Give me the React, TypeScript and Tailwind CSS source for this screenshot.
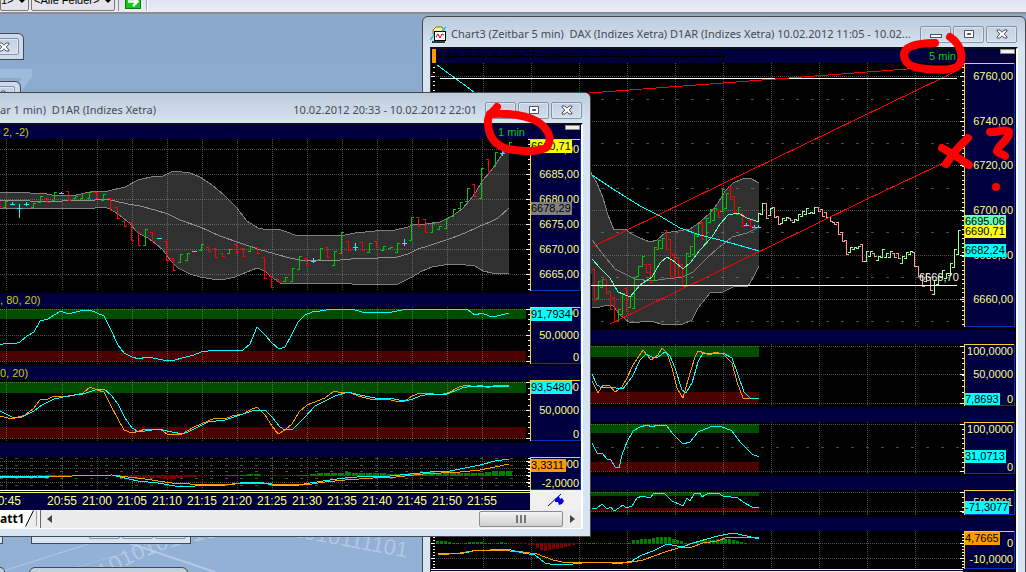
import type { ReactNode } from 'react';

type Kind = 'u' | 'd' | 'n';
type Bar = [x: number, high: number, low: number, kind: Kind];

type AxisLabel = { y: number; text: string };
type AxisTag = { y: number; text: string; fill: string; color?: string; width?: number };

const CYAN = '#00ffff';
const ORANGE = '#ff9900';
const RED = '#ff0000';
const GREEN = '#00c800';

const strong = { u: GREEN, d: RED, n: CYAN };
const pale = { u: '#99ff99', d: '#ff9999', n: CYAN };

const minuteBars: Bar[] = [
  [-2, 204, 207, 'd'], [5, 201, 208, 'u'], [12, 202, 205, 'n'], [19, 204, 218, 'n'], [26, 202, 206, 'n'],
  [33, 203, 208, 'u'], [40, 196, 203, 'u'], [47, 198, 203, 'd'], [54, 192, 201, 'u'], [61, 192, 194, 'n'],
  [68, 191, 201, 'd'], [75, 196, 199, 'u'], [82, 193, 199, 'u'], [89, 192, 199, 'u'], [96, 192, 199, 'd'],
  [103, 194, 201, 'u'], [110, 198, 211, 'd'], [117, 207, 219, 'd'], [124, 221, 227, 'd'], [131, 222, 241, 'd'],
  [138, 231, 246, 'd'], [145, 229, 246, 'u'], [152, 232, 242, 'd'], [159, 238, 238, 'n'], [166, 241, 261, 'd'],
  [173, 258, 271, 'd'], [180, 254, 263, 'u'], [187, 253, 261, 'u'], [194, 251, 251, 'n'], [201, 244, 251, 'u'],
  [208, 247, 252, 'd'], [215, 248, 258, 'd'], [222, 253, 257, 'd'], [229, 249, 254, 'u'], [236, 244, 253, 'd'],
  [243, 248, 257, 'd'], [250, 246, 252, 'u'], [257, 247, 254, 'd'], [264, 257, 279, 'd'], [271, 276, 288, 'd'],
  [278, 279, 283, 'd'], [285, 277, 282, 'u'], [292, 268, 282, 'u'], [299, 256, 270, 'u'], [306, 258, 266, 'd'],
  [313, 258, 263, 'n'], [320, 248, 260, 'u'], [327, 247, 258, 'd'], [334, 251, 266, 'u'], [341, 232, 254, 'u'],
  [348, 241, 251, 'd'], [355, 243, 251, 'n'], [362, 242, 251, 'd'], [369, 243, 253, 'u'], [376, 241, 248, 'd'],
  [383, 246, 251, 'u'], [390, 247, 249, 'u'], [397, 243, 253, 'u'], [404, 239, 246, 'n'], [411, 217, 241, 'u'],
  [418, 217, 227, 'd'], [425, 219, 233, 'd'], [432, 223, 233, 'u'], [439, 226, 230, 'u'], [446, 218, 229, 'u'],
  [453, 209, 217, 'u'], [460, 202, 209, 'u'], [467, 188, 202, 'u'], [474, 184, 197, 'd'], [481, 168, 199, 'u'],
  [488, 159, 172, 'd'], [495, 152, 167, 'u'], [502, 150, 156, 'n'], [509, 142, 148, 'u'],
];

const fiveMinuteBars: Bar[] = [
  [594, 269, 301, 'd'], [598, 281, 299, 'u'], [602, 279, 288, 'u'], [606, 279, 294, 'd'], [610, 291, 310, 'd'],
  [614, 297, 322, 'd'], [618, 309, 321, 'u'], [622, 293, 315, 'u'], [626, 288, 312, 'd'], [630, 296, 308, 'u'],
  [634, 277, 309, 'u'], [638, 266, 277, 'u'], [642, 256, 267, 'u'], [646, 264, 273, 'd'], [650, 264, 283, 'd'],
  [654, 247, 281, 'u'], [658, 240, 250, 'u'], [662, 238, 249, 'u'], [666, 230, 250, 'd'], [670, 239, 277, 'd'],
  [674, 254, 280, 'd'], [678, 257, 277, 'd'], [682, 264, 287, 'd'], [686, 253, 287, 'u'], [690, 246, 257, 'u'],
  [694, 234, 255, 'u'], [698, 223, 237, 'u'], [702, 222, 240, 'd'], [706, 218, 244, 'u'], [710, 209, 223, 'u'],
  [714, 208, 221, 'u'], [718, 209, 218, 'd'], [722, 189, 212, 'u'], [726, 193, 209, 'u'], [730, 186, 200, 'd'],
  [734, 196, 213, 'd'], [738, 207, 215, 'u'], [742, 213, 227, 'd'], [746, 223, 226, 'n'], [750, 220, 227, 'd'],
  [754, 225, 228, 'n'], [758, 225, 228, 'n'],
];

const previewBars: Bar[] = [
  [758, 213, 222, 'u'], [762, 203, 215, 'u'], [766, 203, 219, 'd'], [770, 208, 216, 'u'], [774, 207, 218, 'd'],
  [778, 216, 225, 'd'], [782, 218, 224, 'u'], [786, 217, 221, 'u'], [790, 218, 221, 'd'], [794, 219, 223, 'u'],
  [798, 214, 221, 'u'], [802, 211, 217, 'u'], [806, 208, 215, 'u'], [810, 212, 214, 'u'], [814, 207, 214, 'u'],
  [818, 207, 212, 'd'], [822, 209, 217, 'd'], [826, 212, 218, 'd'], [830, 217, 222, 'd'], [834, 222, 225, 'd'],
  [838, 222, 235, 'd'], [842, 232, 242, 'd'], [846, 240, 255, 'd'], [850, 247, 253, 'u'], [854, 247, 250, 'u'],
  [858, 246, 249, 'u'], [862, 244, 262, 'd'], [866, 251, 262, 'u'], [870, 251, 257, 'u'], [874, 253, 257, 'd'],
  [878, 256, 261, 'u'], [882, 249, 258, 'u'], [886, 253, 258, 'u'], [890, 251, 258, 'u'], [894, 253, 258, 'd'],
  [898, 253, 259, 'd'], [902, 256, 264, 'u'], [906, 252, 259, 'u'], [910, 251, 255, 'u'], [914, 252, 267, 'd'],
  [918, 266, 277, 'd'], [922, 275, 287, 'd'], [926, 273, 282, 'u'], [930, 277, 291, 'd'], [934, 280, 295, 'u'],
  [938, 276, 285, 'u'], [942, 270, 278, 'u'], [946, 273, 279, 'u'], [950, 263, 276, 'u'], [954, 249, 268, 'u'],
  [958, 230, 255, 'u'],
];

const minuteGrid = [6, 62, 97, 132, 167, 202, 237, 272, 307, 342, 377, 412, 447, 482];
const fiveGrid = [483, 531, 579, 627, 675, 723, 771, 819, 867, 915];

const minuteUpper =
  '0,192 30,193 42,193 52,195 67,195 76,195 90,192 108,191 125,187 138,180 155,176 163,176 173,171 190,173 200,177 212,185 224,195 236,207 247,221 258,228 268,230 278,229 290,233 297,236 320,235 345,235 355,233 375,231 395,230 408,227 415,224 425,224 440,222 452,216 462,209 470,200 476,192 482,181 490,172 497,162 503,153 509,145';
const minuteLower =
  '509,273 492,273 483,271 475,266 456,264 450,264 432,267 422,271 412,277 398,284 352,284 340,283 300,283 288,284 280,283 270,276 265,271 257,268 247,272 235,277 222,280 212,279 200,277 190,274 178,268 170,260 163,250 156,244 148,238 138,233 128,222 118,214 110,209 104,207 95,208 62,208 45,208 35,209 0,208';
const fiveUpper =
  '590,168 592,175 597,183 603,198 608,215 614,230 625,229 632,234 640,238 650,242 657,240 665,233 678,231 690,229 700,222 710,213 718,203 725,191 733,183 742,179 750,178 759,183';
const fiveLower =
  '759,266 753,278 748,286 733,287 723,292 710,293 698,308 692,320 683,324 665,325 650,321 630,323 620,315 613,306 608,305 600,307 592,308';

function range(from: number, to: number, step: number) {
  const out: number[] = [];
  for (let v = from; v <= to; v += step) out.push(v);
  return out;
}

function Grid({
  xs,
  ys,
  dashes = [],
  left,
  right,
  top,
  bottom,
}: {
  xs: number[];
  ys: number[];
  dashes?: number[];
  left: number;
  right: number;
  top: number;
  bottom: number;
}) {
  return (
    <g stroke="#a0a0a0" strokeOpacity={0.48}>
      {xs.map((x) => (
        <line key={`x${x}`} x1={x + 0.5} x2={x + 0.5} y1={top} y2={bottom} strokeDasharray="1 1" />
      ))}
      {ys.map((y) => (
        <line key={`y${y}`} x1={left} x2={right} y1={y + 0.5} y2={y + 0.5} strokeDasharray="1 1" />
      ))}
      {dashes.map((y) => (
        <line key={`d${y}`} x1={left} x2={right} y1={y + 0.5} y2={y + 0.5} strokeDasharray="3 12" />
      ))}
    </g>
  );
}

function Ticks({ x, major, minor }: { x: number; major: number[]; minor: number[] }) {
  return (
    <g fill="#ffffff">
      {major.map((y) => (
        <rect key={`M${y}`} x={x - 4} y={y} width={4} height={1} />
      ))}
      {minor.map((y) => (
        <rect key={`m${y}`} x={x - 2} y={Math.round(y)} width={2} height={1} />
      ))}
    </g>
  );
}

function Bars({ data, colors }: { data: Bar[]; colors: Record<Kind, string> }) {
  return (
    <>
      {data.map(([x, high, low, kind]) => {
        const mid = Math.round((high + low) / 2) - (low - high > 8 ? 3 : 0);
        const left = kind === 'u' ? low - 1 : kind === 'd' ? high : mid;
        const right = kind === 'u' ? high : kind === 'd' ? low - 1 : mid;
        return (
          <g key={`${x}-${high}`} fill={colors[kind]}>
            <rect x={x} y={high} width={1} height={Math.max(1, low - high)} />
            <rect x={x - 2} y={left} width={2} height={1} />
            <rect x={x + 1} y={right} width={2} height={1} />
          </g>
        );
      })}
    </>
  );
}

function Line({ points, color, width = 1 }: { points: string; color: string; width?: number }) {
  return <polyline points={points} fill="none" stroke={color} strokeWidth={width} />;
}

function Zones({
  left,
  right,
  green,
  red,
}: {
  left: number;
  right: number;
  green: [number, number];
  red: [number, number];
}) {
  return (
    <>
      <rect x={left} y={green[0]} width={right - left} height={green[1] - green[0]} fill="#004d00" />
      <rect x={left} y={red[0]} width={right - left} height={red[1] - red[0]} fill="#4d0000" />
    </>
  );
}

function Histogram({ start, step, base, values }: { start: number; step: number; base: number; values: number[] }) {
  return (
    <>
      {values.map((v, i) =>
        v === 0 ? null : (
          <rect
            key={i}
            x={start + i * step}
            y={v > 0 ? base - v + 1 : base}
            width={step - 1}
            height={Math.abs(v)}
            fill={v > 0 ? '#008000' : '#800000'}
          />
        )
      )}
    </>
  );
}

function Axis({
  top,
  height,
  labels,
  tags,
}: {
  top: number;
  height: number;
  labels: AxisLabel[];
  tags: AxisTag[];
}) {
  return (
    <svg
      viewBox={`0 ${top} 51 ${height}`}
      width={51}
      height={height}
      className="shrink-0 font-['Liberation_Sans',sans-serif] text-[11px]"
    >
      <rect x={0} y={top} width={51} height={height} fill="#000040" />
      {labels.map((l) => (
        <text key={l.text} x={49} y={l.y + 4} textAnchor="end" fill="#ffff80">
          {l.text}
        </text>
      ))}
      {tags.map((t) => (
        <g key={t.text}>
          <rect x={1} y={t.y - 6} width={t.width ?? 41} height={13} fill={t.fill} />
          <text x={1} y={t.y + 4} fill={t.color ?? '#000000'}>
            {t.text}
          </text>
        </g>
      ))}
      <rect x={50} y={top} width={1} height={height} fill="#0033cc" />
      <rect x={0} y={top + height - 1} width={51} height={1} fill="#0033cc" />
      <rect x={0} y={top} width={1} height={height} fill="#ffcc33" />
      <rect x={0} y={top} width={50} height={1} fill="#ffcc33" />
    </svg>
  );
}

function Panel({
  header,
  left,
  width,
  top,
  height,
  gap,
  labels,
  tags,
  children,
}: {
  header?: ReactNode;
  left: number;
  width: number;
  top: number;
  height: number;
  gap: number;
  labels: AxisLabel[];
  tags: AxisTag[];
  children: ReactNode;
}) {
  return (
    <section>
      <header className="flex h-3.5 items-center overflow-hidden bg-[#000040] font-['Liberation_Sans',sans-serif] text-[11px] leading-[14px] whitespace-pre text-[#cccc00]">
        {header}
      </header>
      <div className="flex items-start bg-black">
        <svg
          viewBox={`${left} ${top} ${width} ${height}`}
          height={height}
          preserveAspectRatio="xMaxYMin meet"
          shapeRendering="crispEdges"
          className="min-w-0 flex-1"
        >
          {children}
        </svg>
        <Axis top={top} height={height - gap} labels={labels} tags={tags} />
      </div>
    </section>
  );
}

function CaptionButton({ kind }: { kind: 'Minimize' | 'Maximize' | 'Close' }) {
  return (
    <button
      type="button"
      aria-label={kind}
      className="flex h-[17px] w-[31px] items-center justify-center rounded-[2px] border border-[#8293ad] bg-linear-to-b from-[#c3d0df] to-[#d3dfec] shadow-[inset_0_0_0_1px_#dde7f1]"
    >
      <svg width={12} height={10} viewBox="0 0 12 10">
        {kind === 'Minimize' && (
          <rect x={0.5} y={5.5} width={11} height={3} fill="#fff" stroke="#4b5365" />
        )}
        {kind === 'Maximize' && (
          <path d="M1.5 1.5h9v7h-9zM4.5 4.5h3v1h-3z" fill="#fff" stroke="#4b5365" />
        )}
        {kind === 'Close' && (
          <path
            d="M1 1h3l2 2.2L8 1h3v1L8.2 5 11 8v1H8L6 6.8 4 9H1V8l2.8-3L1 2z"
            fill="#fff"
            stroke="#4b5365"
          />
        )}
      </svg>
    </button>
  );
}

function Caption({ children }: { children: ReactNode }) {
  return (
    <div className="flex h-[30px] items-center pt-1 pr-px font-['Noto_Sans','Open_Sans',sans-serif] text-[11px] whitespace-pre text-[#454c55]">
      {children}
      <div className="ml-2 flex shrink-0 gap-0.5">
        <CaptionButton kind="Minimize" />
        <CaptionButton kind="Maximize" />
        <CaptionButton kind="Close" />
      </div>
    </div>
  );
}

function PeriodLabel({ children, swatch }: { children: ReactNode; swatch: string }) {
  return (
    <span className="ml-auto flex shrink-0 items-start text-[#00cc00]">
      {children}
      <span className={swatch} />
    </span>
  );
}

function MinuteWindow() {
  return (
    <article className="absolute top-[78px] right-[435px] left-0 rounded-tr-md border border-l-0 border-[#45484d] bg-linear-to-b from-[#bccbdb] via-[#d7e4f1] via-[30px] to-[#d7e4f1] pr-[7px] pb-[7px]">
      <Caption>
        <span className="min-w-0 flex-1 overflow-hidden">{'ar 1 min)  D1AR (Indizes Xetra)'}</span>
        <span>10.02.2012 20:33 - 10.02.2012 22:01</span>
      </Caption>
      <div className="border-t-2 border-r-2 border-b border-t-[#101010] border-r-white border-b-white bg-black">
        <Panel
          left={0}
          width={530}
          top={139}
          height={154}
          gap={2}
          header={
            <>
              <span className="pl-[3px]">2, -2)</span>
              <PeriodLabel swatch="mr-px ml-10 h-[5px] w-[15px] border border-[#8a8a8a] bg-[#f0f0f0]">
                1 min
              </PeriodLabel>
            </>
          }
          labels={[
            { y: 149, text: '6690,00' },
            { y: 174, text: '6685,00' },
            { y: 199, text: '6680,00' },
            { y: 224, text: '6675,00' },
            { y: 249, text: '6670,00' },
            { y: 274, text: '6665,00' },
          ]}
          tags={[
            { y: 146, text: '6690,71', fill: '#ffff00' },
            { y: 208, text: '6678,29', fill: '#808080' },
          ]}
        >
          <polygon points={`${minuteUpper} ${minuteLower}`} fill="#303030" />
          <Line points={minuteUpper} color="#808080" />
          <Line points={minuteLower} color="#808080" />
          <Grid
            xs={minuteGrid}
            ys={[149, 174, 199, 224, 249, 274]}
            left={0}
            right={526}
            top={139}
            bottom={291}
          />
          <Line
            color="#909090"
            points="0,200 30,201 62,201 80,200 95,200 105,199 115,201 128,204 140,206 155,210 168,214 180,220 200,227 220,236 240,243 258,249 275,254 290,258 300,260 315,260 340,260 362,258 378,258 397,257 408,254 418,249 428,246 440,242 452,238 465,233 478,227 490,222 498,218 509,208"
          />
          <Bars data={minuteBars} colors={strong} />
          <Ticks x={530} major={[149, 174, 199, 224, 249, 274]} minor={range(139, 290, 5)} />
        </Panel>

        <Panel
          left={0}
          width={530}
          top={307}
          height={59}
          gap={2}
          header={<span className="-ml-1.5">3, 80, 20)</span>}
          labels={[
            { y: 313, text: '100,0000' },
            { y: 335, text: '50,0000' },
            { y: 357, text: '0' },
          ]}
          tags={[{ y: 314, text: '91,7934', fill: CYAN }]}
        >
          <Zones left={0} right={526} green={[309, 319]} red={[351, 361]} />
          <Grid xs={minuteGrid} ys={[309, 335, 361]} left={0} right={526} top={307} bottom={364} />
          <Line
            color={CYAN}
            points="0,345 6,343 14,344 20,342 27,336 34,332 40,321 48,319 54,315 61,311 68,314 76,312 84,310 90,310 97,313 104,316 111,330 118,345 124,353 132,357 139,359 146,357 153,358 163,360 175,360 182,358 194,355 201,352 215,350 222,351 243,350 250,344 257,327 265,335 272,343 279,349 285,347 292,334 298,322 305,315 312,312 320,311 332,309 352,309 362,312 392,312 402,310 415,309 425,310 432,309 440,310 450,309 467,309 475,315 482,313 489,316 497,316 509,313"
          />
          <Ticks x={530} major={[309, 335, 361]} minor={range(314, 360, 5.2)} />
        </Panel>

        <Panel
          left={0}
          width={530}
          top={380}
          height={63}
          gap={2}
          header={<span>0, 20)</span>}
          labels={[
            { y: 387, text: '100,0000' },
            { y: 410, text: '50,0000' },
            { y: 434, text: '0' },
          ]}
          tags={[{ y: 387, text: '93,5480', fill: CYAN }]}
        >
          <Zones left={0} right={526} green={[382, 393]} red={[427, 438]} />
          <Grid xs={minuteGrid} ys={[382, 410, 438]} left={0} right={526} top={380} bottom={441} />
          <Line
            color={ORANGE}
            points="0,416 12,419 25,415 34,408 40,400 48,399 54,396 70,396 83,393 90,387 97,390 104,392 111,406 124,430 132,433 139,431 146,429 160,429 167,434 182,434 194,427 215,418 225,419 232,416 243,414 250,410 257,407 265,415 272,426 278,434 285,430 292,424 299,412 307,405 325,398 334,391 342,393 349,392 358,396 370,399 387,399 395,401 405,401 412,396 420,393 427,393 440,395 450,392 459,387 467,385 474,387 481,385 488,388 495,385 509,385"
          />
          <Line
            color={CYAN}
            points="0,411 12,417 22,417 34,411 42,405 54,399 68,396 83,394 95,390 104,389 111,395 118,404 125,418 132,428 139,432 158,429 172,432 183,434 190,431 208,422 225,420 243,414 255,410 265,410 272,417 280,427 285,430 293,429 299,423 305,417 315,406 325,401 335,396 348,392 360,395 375,398 388,398 405,401 413,399 420,396 430,394 447,394 455,391 462,388 472,386 484,386 490,387 497,386 509,386"
          />
          <Ticks x={530} major={[382, 410, 438]} minor={range(388, 437, 5.6)} />
        </Panel>

        <Panel
          left={0}
          width={530}
          top={457}
          height={33}
          gap={0}
          labels={[
            { y: 464, text: '2,0000' },
            { y: 483, text: '-2,0000' },
          ]}
          tags={[{ y: 465, text: '3,3311', fill: ORANGE, width: 35 }]}
        >
          <Grid
            xs={minuteGrid}
            ys={[461, 468, 475, 482]}
            dashes={[458, 465, 471, 478, 485]}
            left={0}
            right={526}
            top={457}
            bottom={490}
          />
          <Histogram
            start={2}
            step={7}
            base={475}
            values={[
              1, 0, 0, 0, 0, 1, 1, 1, 1, 1, 1, 1, 0, 0, 0, 0, 0, -1, -2, -3, -3, -3, -3, -4, -4, -3, -2, -2, -1, 0, 0,
              0, 1, 1, 1, 2, 2, 0, 0, -1, -1, 0, 1, 1, 2, 3, 3, 3, 3, 4, 3, 3, 3, 3, 3, 2, 2, 2, 3, 3, 4, 4, 3, 3, 3,
              3, 3, 3, 3, 4, 5, 5, 5,
            ]}
          />
          <Line
            color={CYAN}
            points="0,477 38,476 72,476 112,475 120,477 138,481 158,483 175,486 195,486 200,485 225,485 240,483 260,482 272,485 299,485 310,483 330,480 345,478 370,476 390,476 410,474 430,472 450,471 465,468 480,465 495,461 509,459"
          />
          <Line
            color={ORANGE}
            points="0,478 50,477 72,476 112,475 128,477 145,479 158,481 172,483 190,484 235,484 255,483 272,484 312,484 325,482 345,480 373,478 396,477 423,474 460,472 480,470 495,467 509,464"
          />
          <Ticks x={530} major={[461, 468, 475, 482]} minor={range(458, 489, 3.5)} />
        </Panel>

        <div className="flex h-5 bg-[#f0f0f0]">
          <svg
            viewBox="0 490 530 20"
            height={20}
            preserveAspectRatio="xMaxYMin meet"
            className="min-w-0 flex-1 bg-[#000040] font-['Liberation_Sans',sans-serif] text-[12px]"
          >
            <rect x={0} y={490} width={530} height={1} fill="#ffffff" />
            <rect x={0} y={492} width={530} height={1} fill="#ffff66" />
            {['20:45', '20:55', '21:00', '21:05', '21:10', '21:15', '21:20', '21:25', '21:30', '21:35', '21:40', '21:45', '21:50', '21:55'].map(
              (label, i) => (
                <text key={label} x={minuteGrid[i]} y={505} textAnchor="middle" fill="#ffff80">
                  {label}
                </text>
              )
            )}
          </svg>
          <div className="flex w-[51px] items-center justify-center">
            <svg width={18} height={14} viewBox="0 0 18 14">
              <path d="M1 13 14 1" stroke="#111" fill="none" />
              <path d="M8 6l4-3 1 3 2-1 2 3-2 3-3 1-1-3-3 0z" fill="#0000e0" />
            </svg>
          </div>
        </div>

        <div className="flex h-[18px] items-stretch bg-[#ececec]">
          <button
            type="button"
            className="bg-white text-left font-['Noto_Sans','Open_Sans',sans-serif] text-[12px] leading-4 font-bold text-black"
          >
            att1
          </button>
          <svg width={14} height={18} viewBox="0 0 14 18">
            <path d="M0 0h9L2 17H0z" fill="#fff" />
            <path d="M9.500 0.500 1.500 16.500" stroke="#000" />
            <path d="M12.500 1v15" stroke="#a0a0a0" />
          </svg>
          <span className="w-[3px] border-r border-[#666] bg-[#f5f5f5]" />
          <button type="button" aria-label="Scroll left" className="w-4 text-center">
            <svg width={5} height={8} viewBox="0 0 5 8" className="mx-auto">
              <path d="M5 0v8L0 4z" fill="#444" />
            </svg>
          </button>
          <div className="flex flex-1 justify-end py-px">
            <div className="flex w-[84px] items-center justify-center gap-px rounded-xs border border-[#8e8e8e] bg-linear-to-b from-[#f4f4f4] to-[#cfcfcf]">
              <span className="h-2 w-0.5 bg-[#777]" />
              <span className="ml-px h-2 w-0.5 bg-[#777]" />
              <span className="ml-px h-2 w-0.5 bg-[#777]" />
            </div>
          </div>
          <button type="button" aria-label="Scroll right" className="w-[18px] text-center">
            <svg width={5} height={8} viewBox="0 0 5 8" className="mx-auto">
              <path d="M0 0v8l5-4z" fill="#444" />
            </svg>
          </button>
        </div>
      </div>
    </article>
  );
}

function FiveMinuteWindow() {
  return (
    <article className="absolute top-0.5 right-0 left-[422px] rounded-t-md border border-[#45484d] bg-linear-to-b from-[#bccbdb] via-[#d7e4f1] via-[30px] to-[#d7e4f1] pr-[7px] pl-[7px]">
      <Caption>
        <svg width={17} height={17} viewBox="0 0 17 17" className="mr-1 shrink-0">
          <path d="M3 4 6 1h6l2 3v4H3z" fill="#f4f08a" stroke="#7d7a2a" />
          <rect x={4.500} y={5.500} width={11} height={9} fill="#fff" stroke="#000" />
          <path d="M6 11l2-3 2 4 2-4 2 1" stroke="#e00000" fill="none" />
          <path d="M0 14 4 9M12 5l4-4" stroke="#00c8e8" strokeWidth={1.500} />
          <path d="M2 16h13" stroke="#000" strokeWidth={1.500} />
        </svg>
        <span className="min-w-0 flex-1 overflow-hidden">
          {'Chart3 (Zeitbar 5 min)  DAX (Indizes Xetra) D1AR (Indizes Xetra) 10.02.2012 11:05 - 10.02...'}
        </span>
      </Caption>
      <div className="border-t-2 border-r-2 border-l border-t-[#101010] border-r-white border-l-[#303030] bg-black pr-px">
        <Panel
          left={431}
          width={533}
          top={63}
          height={267}
          gap={3}
          header={
            <>
              <span className="mr-0.5 ml-px h-3.5 w-1 shrink-0 bg-[#ff9900]" />
              <span className="text-black line-through">
                {'DAX P-IN  X-DAXTR boll(20, 2, -2) move(9, 0) move(60, 0)'}
              </span>
              <PeriodLabel swatch="ml-11 h-[5px] w-[15px] border border-[#8a8a8a] bg-[#f0f0f0]">
                5 min
              </PeriodLabel>
            </>
          }
          labels={[
            { y: 76, text: '6760,00' },
            { y: 121, text: '6740,00' },
            { y: 165, text: '6720,00' },
            { y: 210, text: '6700,00' },
            { y: 255, text: '6680,00' },
            { y: 299, text: '6660,00' },
          ]}
          tags={[
            { y: 221, text: '6695,06', fill: '#66ffb2' },
            { y: 231, text: '6690,71', fill: '#ffff00' },
            { y: 250, text: '6682,24', fill: CYAN },
          ]}
        >
          <polygon points={`${fiveUpper} ${fiveLower}`} fill="#303030" />
          <Line points={fiveUpper} color="#808080" />
          <Line points={fiveLower} color="#808080" />
          <Grid
            xs={fiveGrid}
            ys={[76, 121, 165, 210, 255, 299]}
            dashes={[99, 143, 188, 232, 277, 321]}
            left={436}
            right={960}
            top={63}
            bottom={327}
          />
          <Line
            color="#808080"
            points="592,240 602,253 615,269 627,275 635,279 652,281 665,279 683,277 693,272 707,258 718,248 732,237 747,233 759,227"
          />
          <Bars data={fiveMinuteBars} colors={strong} />
          <Line
            color="#66ffb2"
            points="592,259 600,268 610,278 618,292 630,297 640,285 652,277 660,263 667,257 675,262 683,269 690,263 700,250 712,237 720,224 728,215 738,213 747,218 759,222"
          />
          <Line
            color={CYAN}
            points="437,65 474,92 592,175 613,189 640,206 660,216 680,228 700,235 724,241 745,247 759,251"
          />
          <Bars data={previewBars} colors={pale} />
          <Line color={RED} points="592,247 720,185 942,78 960,69" />
          <Line color={RED} points="610,324 810,227 865,200 950,160" />
          <Line color="#ffffff" points="440,78.500 957,78.500" />
          <Line color="#ffffff" points="431,285.500 957,285.500" />
          <Line color={RED} points="589,93 723,83 907,69 957,66" />
          <text x={919} y={281} fill="#f0f0f0" className="font-['Liberation_Sans',sans-serif] text-[11px]">
            6666,70
          </text>
          <Ticks x={435} major={[76, 121]} minor={range(67, 325, 4.500)} />
          <Ticks x={964} major={[76, 121, 165, 210, 255, 299]} minor={range(67, 325, 4.500)} />
        </Panel>

        <Panel
          left={431}
          width={533}
          top={344}
          height={64}
          gap={2}
          labels={[
            { y: 351, text: '100,0000' },
            { y: 374, text: '50,0000' },
            { y: 399, text: '0' },
          ]}
          tags={[{ y: 399, text: '7,8693', fill: CYAN, width: 35 }]}
        >
          <Zones left={431} right={759} green={[346, 357]} red={[392, 403]} />
          <Grid xs={fiveGrid} ys={[346, 374, 403]} left={431} right={960} top={344} bottom={406} />
          <Line
            color={ORANGE}
            points="592,381 598,393 603,385 610,386 615,392 622,387 627,378 633,365 643,350 651,360 658,355 662,348 667,353 672,368 677,388 683,398 688,380 695,357 698,351 705,353 710,355 715,352 723,354 732,363 737,382 743,398 759,399"
          />
          <Line
            color={CYAN}
            points="592,374 597,385 602,388 608,387 623,389 632,377 640,360 646,354 652,357 658,357 665,352 670,356 675,368 682,390 686,393 692,383 698,362 703,353 723,353 732,358 738,375 744,392 750,398 759,399"
          />
          <Ticks x={964} major={[346, 374, 403]} minor={range(352, 402, 5.700)} />
        </Panel>

        <Panel
          left={431}
          width={533}
          top={422}
          height={54}
          gap={2}
          labels={[
            { y: 429, text: '100,0000' },
            { y: 467, text: '0' },
          ]}
          tags={[{ y: 456, text: '31,0713', fill: CYAN }]}
        >
          <Zones left={431} right={759} green={[424, 433]} red={[462, 471]} />
          <Grid xs={fiveGrid} ys={[424, 471]} dashes={[447]} left={431} right={960} top={422} bottom={474} />
          <Line
            color={CYAN}
            points="592,443 597,453 602,453 607,459 611,460 615,467 619,468 622,455 627,442 633,431 640,427 647,425 652,427 657,425 666,425 673,434 683,444 690,442 698,432 705,429 713,426 720,426 732,431 740,442 752,454 759,457"
          />
          <Ticks x={964} major={[424, 471]} minor={range(429, 470, 4.700)} />
        </Panel>

        <Panel
          left={431}
          width={533}
          top={490}
          height={27}
          gap={2}
          labels={[{ y: 502, text: '-50,0001' }]}
          tags={[{ y: 507, text: '-71,3077', fill: CYAN, width: 44 }]}
        >
          <Zones left={431} right={759} green={[492, 496]} red={[508, 512]} />
          <Grid xs={fiveGrid} ys={[492, 511]} left={431} right={960} top={490} bottom={515} />
          <Line
            color={CYAN}
            points="592,508 597,508 602,504 607,509 611,507 614,511 619,508 623,505 626,508 632,506 637,498 642,496 650,498 654,493 665,494 672,501 683,506 687,498 690,501 694,494 700,493 702,497 707,494 718,493 723,496 738,498 743,502 752,507 759,507"
          />
          <Ticks x={964} major={[492, 511]} minor={range(492, 512, 5)} />
        </Panel>

        <Panel
          left={431}
          width={533}
          top={531}
          height={38}
          gap={0}
          labels={[
            { y: 543, text: '0' },
            { y: 559, text: '-10,0000' },
          ]}
          tags={[{ y: 538, text: '4,7665', fill: ORANGE, width: 35 }]}
        >
          <Grid xs={fiveGrid} ys={[543, 558]} left={436} right={960} top={531} bottom={569} />
          <Histogram
            start={436}
            step={4}
            base={543}
            values={[
              3, 3, 3, 2, 1, 1, 0, 1, 2, 2, 2, 2, 1, 1, 0, 1, 2, 1, 0, 0, -1, -1, -1, -2, -2, -5, -7, -8, -7, -6, -6,
              -5, -4, -3, -2, -1, 0, 0, 1, 1, 0, 0, 0, 1, 0, 0, 0, 0, 1, 4, 4, 5, 5, 5, 6, 7, 7, 7, 7, 5, 4, 3, 1, 1,
              2, 2, 3, 4, 4, 4, 5, 5, 5, 5, 4, 3, 2, 1, -1, -1, -1,
            ]}
          />
          <Line
            color={CYAN}
            points="438,553 460,554 473,551 507,549 523,553 535,555 545,563 555,565 573,564 592,562 612,563 623,563 632,561 642,555 653,551 667,544 682,547 693,543 707,539 718,536 733,533 747,536 759,539"
          />
          <Line
            color={ORANGE}
            points="438,555 460,553 472,551 497,550 523,552 537,554 553,560 567,563 592,562 632,562 643,560 665,552 678,548 692,547 703,543 717,541 728,537 753,537 759,538"
          />
          <Ticks x={435} major={[543, 558]} minor={range(534, 568, 3)} />
          <Ticks x={964} major={[543, 558]} minor={range(534, 568, 3)} />
        </Panel>
        <div className="mr-[52px] h-3.5 border-t border-white bg-[#000040] pt-px">
          <div className="h-px bg-[#ffff66]" />
        </div>
      </div>
    </article>
  );
}

function Wallpaper() {
  return (
    <svg className="absolute inset-0" width="100%" height="100%">
      <g fill="#9dbadb">
        <path d="M0 55h32v8L20 79h-9l11-15H0z" />
      </g>
      <g fill="none" stroke="#c8dbef" strokeOpacity={0.6}>
        <path d="M0 558 110 523" />
        <path d="M108 522 215 558" strokeWidth={2} />
        <path d="M60 558 190 520" strokeOpacity={0.3} />
      </g>
      <path id="binary" d="M104 566C150 532 230 512 300 524L424 547" fill="none" />
      <text
        fill="#c3d6ec"
        fillOpacity={0.65}
        className="font-['Liberation_Sans',sans-serif] text-[22px]"
      >
        <textPath href="#binary">10101010101010101010111101</textPath>
      </text>
    </svg>
  );
}

function Toolbar() {
  return (
    <div className="flex h-3.5 items-end overflow-hidden border-b-2 border-[#8c8c93] bg-linear-to-b from-[#e0e3f5] to-[#ececf9] pb-px font-['Liberation_Sans',sans-serif] text-[11px]">
      <div className="relative">
        <select
          aria-label="List"
          className="block h-5 w-[29px] appearance-none rounded-[2px] border border-[#777] bg-[#e4e4ea] pb-0.5 text-black"
        >
          <option>1&gt;</option>
        </select>
        <span className="pointer-events-none absolute right-1 bottom-2 border-x-[3px] border-t-[3px] border-x-transparent border-t-black" />
      </div>
      <div className="relative ml-0.5">
        <select
          aria-label="Fields"
          className="block h-5 w-[84px] appearance-none rounded-[2px] border border-[#777] bg-[#e4e4ea] pb-0.5 pl-0.5 text-black"
        >
          <option>&lt;Alle Felder&gt;</option>
        </select>
        <span className="pointer-events-none absolute right-1 bottom-2 border-x-[3px] border-t-[3px] border-x-transparent border-t-black" />
      </div>
      <span className="ml-[3px] h-3 w-px bg-[#8c8c93]" />
      <button type="button" aria-label="Go" className="mb-0.5 ml-1.5 h-4 w-4 bg-[#1fb01f]">
        <svg width={16} height={16} viewBox="0 0 16 16">
          <rect x={0.500} y={0.500} width={15} height={15} fill="#16c416" stroke="#0c7d0c" />
          <path d="M3 8.500h8M8 4l4.500 4.500L8 13" fill="none" stroke="#fff" strokeWidth={2.500} />
        </svg>
      </button>
      <span className="ml-[5px] h-3 w-0.5 border-l border-[#a6a6b0] bg-white" />
    </div>
  );
}

function Annotations() {
  return (
    <svg
      width={1026}
      height={572}
      viewBox="0 0 1026 572"
      className="pointer-events-none absolute top-0 right-0"
      fill="none"
      stroke="#ff0000"
      strokeWidth={8}
      strokeLinecap="round"
      strokeLinejoin="round"
    >
      <path d="M497 107C494 112 487 113 488 124C489 138 496 146 508 149C522 152 541 152 547 147C552 140 550 130 538 122C525 114 508 113 490 114" />
      <path d="M935 43C922 43 905 45 904 54C904 65 914 68 927 69C940 70 955 71 960 64C964 54 959 43 950 37" />
      <path d="M942 148C950 152 960 159 969 165M968 138C960 145 952 155 946 164" />
      <path d="M990 132C996 133 1006 128 1009 132C1010 139 999 144 997 151C997 154 1002 153 1005 156" />
      <circle cx={996} cy={187} r={4} fill="#ff0000" stroke="none" />
    </svg>
  );
}

export default function App() {
  return (
    <main className="relative flex h-screen w-full flex-col overflow-hidden">
      <Toolbar />
      <div className="relative flex-1 overflow-hidden bg-linear-to-b from-[#8aa9cd] to-[#93b1d6]">
        <Wallpaper />
        <div className="absolute top-[19px] left-0 flex h-[27px] w-6 items-center rounded-tr-md border border-l-0 border-[#45484d] bg-[#cddaea]">
          <span className="-ml-3">
            <CaptionButton kind="Close" />
          </span>
        </div>
        <div className="absolute top-[67px] left-0 h-5 w-[21px] rounded-tr-md border border-l-0 border-[#45484d] bg-[#cddaea] pt-1">
          <span className="-ml-4 block">
            <CaptionButton kind="Close" />
          </span>
        </div>
        <div className="absolute top-[500px] left-0 h-[30px] w-[3px] border-r border-b border-[#45484d] bg-[#d7e4f1]" />
        <div className="absolute top-[500px] left-[31px] flex h-[30px] w-40 items-end justify-end gap-0.5 border border-[#45484d] bg-[#d7e4f1] pr-1 pb-1">
          <CaptionButton kind="Minimize" />
          <CaptionButton kind="Maximize" />
          <CaptionButton kind="Close" />
        </div>
        <div className="absolute top-[553px] left-[29px] h-6 w-[159px] rounded-t-md border border-[#45484d] bg-[#c3d0de]" />
        <div className="absolute top-[553px] left-0 h-6 w-[5px] rounded-tr-md border border-l-0 border-[#45484d] bg-[#c3d0de]" />
        <FiveMinuteWindow />
        <MinuteWindow />
      </div>
      <Annotations />
    </main>
  );
}
